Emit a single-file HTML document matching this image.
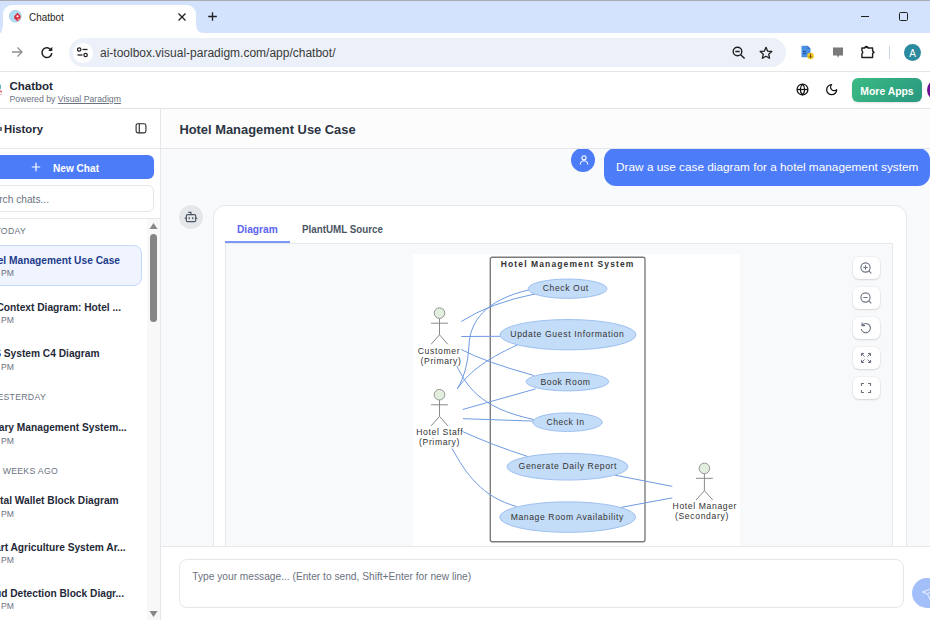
<!DOCTYPE html>
<html><head><meta charset="utf-8"><style>
html,body{margin:0;padding:0;width:930px;height:620px;overflow:hidden;background:#fff;}
body{position:relative;font-family:"Liberation Sans", sans-serif;}
.t{position:absolute;line-height:1;white-space:nowrap;}
svg{overflow:visible;}
</style></head><body>
<div style="position:absolute;left:0px;top:0px;width:930px;height:33px;background:#d3e3fd;"></div>
<div style="position:absolute;left:0px;top:0px;width:930px;height:1px;background:#a8abb0;"></div>
<div style="position:absolute;left:2.5px;top:5px;width:193.5px;height:28px;background:#fff;border-radius:9px 9px 0 0;"></div>
<svg style="position:absolute;left:188px;top:24px;" width="16" height="9" viewBox="0 0 16 9"><path d="M0 0 L8 0 Q8 9 16 9 L0 9 Z" fill="#fff"/></svg>
<svg style="position:absolute;left:0px;top:24px;" width="4" height="9" viewBox="0 0 4 9"><path d="M4 0 L4 9 L0 9 Q2 9 2 5 Z" fill="#fff"/></svg>
<svg style="position:absolute;left:8px;top:9px;" width="15" height="15" viewBox="0 0 15 15"><circle cx="7.3" cy="7.2" r="5.9" fill="#aedcf3" stroke="#9cc6dc" stroke-width="0.7"/><path d="M9.5 3.8 L12.7 7 L12.2 9.6 L9.5 12.4 L6.3 9.2 L6.3 7 Z" fill="#d42a3a"/><path d="M9.5 9.5 L12.2 9.6 L9.5 12.4 Z" fill="#e88a93"/><circle cx="9.5" cy="7.3" r="1.1" fill="#fff"/></svg>
<div class="t" style="left:29.00px;top:12.09px;font-size:11px;color:#1f1f1f;font-weight:normal;transform:scaleX(0.9);transform-origin:left center;">Chatbot</div>
<svg style="position:absolute;left:177px;top:12px;" width="10" height="10" viewBox="0 0 10 10"><path d="M1.5 1.5 L8.5 8.5 M8.5 1.5 L1.5 8.5" stroke="#1f1f1f" stroke-width="1.3"/></svg>
<svg style="position:absolute;left:207px;top:11px;" width="11" height="11" viewBox="0 0 11 11"><path d="M5.5 1.2 V9.8 M1.2 5.5 H9.8" stroke="#1f1f1f" stroke-width="1.3"/></svg>
<div style="position:absolute;left:861px;top:16px;width:8px;height:1px;background:#1f1f1f;"></div>
<div style="position:absolute;left:899px;top:12px;width:9px;height:9px;border:1.2px solid #1f1f1f;border-radius:1.5px;box-sizing:border-box;"></div>
<div style="position:absolute;left:0px;top:33px;width:930px;height:38px;background:#fff;"></div>
<div style="position:absolute;left:0px;top:71px;width:930px;height:1px;background:#e6e6e6;"></div>
<svg style="position:absolute;left:10px;top:45px;" width="14" height="14" viewBox="0 0 14 14"><path d="M2 7 H12 M7.5 2.5 L12 7 L7.5 11.5" stroke="#8f8f8f" stroke-width="1.3" fill="none"/></svg>
<svg style="position:absolute;left:40px;top:45px;" width="14" height="14" viewBox="0 0 14 14"><path d="M11.2 5.2 A4.9 4.9 0 1 0 11.8 8" stroke="#1f1f1f" stroke-width="1.5" fill="none"/><path d="M12.3 1.8 V6 H8.1 Z" fill="#1f1f1f"/></svg>
<div style="position:absolute;left:69px;top:38px;width:717px;height:29px;background:#ecf1f9;border-radius:14.5px;"></div>
<div style="position:absolute;left:72.5px;top:42.5px;width:20px;height:20px;background:#fff;border-radius:50%;"></div>
<svg style="position:absolute;left:76px;top:46px;" width="14" height="13" viewBox="0 0 14 13"><circle cx="3.2" cy="3.5" r="1.7" fill="none" stroke="#1f1f1f" stroke-width="1.2"/><path d="M6.5 3.5 H11.5" stroke="#1f1f1f" stroke-width="1.3"/><circle cx="9.6" cy="9" r="1.7" fill="none" stroke="#1f1f1f" stroke-width="1.2"/><path d="M1.5 9 H6.5" stroke="#1f1f1f" stroke-width="1.3"/></svg>
<div class="t" style="left:100.00px;top:47.14px;font-size:12px;color:#3a3a3a;font-weight:normal;">ai-toolbox.visual-paradigm.com/app/chatbot/</div>
<svg style="position:absolute;left:732px;top:46px;" width="14" height="14" viewBox="0 0 14 14"><circle cx="5.5" cy="5.5" r="4.3" fill="none" stroke="#1f1f1f" stroke-width="1.4"/><path d="M3.3 5.5 H7.7 M8.7 8.7 L12.6 12.6" stroke="#1f1f1f" stroke-width="1.4"/></svg>
<svg style="position:absolute;left:759px;top:45.5px;" width="14" height="14" viewBox="0 0 14 14"><path d="M7 1.3 L8.7 5.2 L12.8 5.5 L9.7 8.2 L10.6 12.3 L7 10.2 L3.4 12.3 L4.3 8.2 L1.2 5.5 L5.3 5.2 Z" fill="none" stroke="#1f1f1f" stroke-width="1.3" stroke-linejoin="round"/></svg>
<svg style="position:absolute;left:800px;top:45px;" width="15" height="15" viewBox="0 0 15 15"><path d="M1.5 0.8 H7.5 L10.5 3.8 V12.2 H1.5 Z" fill="#4a90e2"/><path d="M7.5 0.8 V3.8 H10.5" fill="#2b6cc4"/><rect x="3" y="6" width="3" height="1" fill="#1a4f9c"/><rect x="3" y="8" width="3" height="1" fill="#1a4f9c"/><circle cx="10.5" cy="11" r="3.3" fill="#f3c623"/><path d="M10.5 8.8 V12.6 M9 11.3 L10.5 12.8 L12 11.3" stroke="#5a4500" stroke-width="0.9" fill="none"/></svg>
<svg style="position:absolute;left:832px;top:46px;" width="12" height="13" viewBox="0 0 12 13"><path d="M1 1.5 H11 V9.5 H7 L6 11.8 L5 9.5 H1 Z" fill="#7a7a7a"/></svg>
<svg style="position:absolute;left:860px;top:45px;" width="16" height="14" viewBox="0 0 16 14"><path d="M1.9 3 H4.9 V2.2 Q6.4 0.6 7.9 2.2 V3 H12.6 V5.8 L14 7.3 L12.6 8.8 V12.5 H1.9 V8.8 Q3.6 7.3 1.9 5.8 Z" fill="none" stroke="#1f1f1f" stroke-width="1.4" stroke-linejoin="round"/><path d="M4.9 3 V2.2 Q6.4 0.6 7.9 2.2 V3 Z M12.6 5.8 L14 7.3 L12.6 8.8 Z" fill="#1f1f1f"/></svg>
<div style="position:absolute;left:889px;top:46px;width:1px;height:13px;background:#c7d3e6;"></div>
<div style="position:absolute;left:904px;top:44px;width:17px;height:17px;background:#2b8a9e;border-radius:50%;"></div>
<div class="t" style="left:912.50px;transform:translateX(-50%);top:48.53px;font-size:10px;color:#fff;font-weight:normal;">A</div>
<div style="position:absolute;left:0px;top:72px;width:930px;height:36px;background:#fff;"></div>
<div style="position:absolute;left:0px;top:108px;width:930px;height:1.5px;background:#e2e3e6;box-shadow:0 1px 3px rgba(0,0,0,0.05);"></div>
<svg style="position:absolute;left:-10px;top:82px;" width="12" height="14" viewBox="0 0 12 14"><circle cx="5" cy="5" r="6" fill="#5aa9b8"/><rect x="8" y="8.5" width="4" height="2" fill="#e37b86"/><rect x="8" y="12" width="4" height="1" fill="#f0b3b9"/></svg>
<div class="t" style="left:9.50px;top:80.57px;font-size:11.5px;color:#1f2937;font-weight:bold;">Chatbot</div>
<div class="t" style="left:9.50px;top:94.54px;font-size:8.7px;color:#6b7280;font-weight:normal;">Powered by <span style="text-decoration:underline">Visual Paradigm</span></div>
<svg style="position:absolute;left:795.6px;top:83.3px;" width="13" height="13" viewBox="0 0 13 13"><g transform="scale(0.5417)" fill="none" stroke="#111" stroke-width="2.3"><circle cx="12" cy="12" r="10"/><path d="M12 2a14.5 14.5 0 0 0 0 20 14.5 14.5 0 0 0 0-20"/><path d="M2 12h20"/></g></svg>
<svg style="position:absolute;left:825.3px;top:83.3px;" width="13.3" height="13.3" viewBox="0 0 13.3 13.3"><g transform="scale(0.5556)" fill="none" stroke="#111" stroke-width="2.3" stroke-linejoin="round"><path d="M12 3a6 6 0 0 0 9 9 9 9 0 1 1-9-9Z"/></g></svg>
<div style="position:absolute;left:852px;top:78px;width:70px;height:24px;background:linear-gradient(135deg,#3bbb83,#2a9880);border-radius:6px;box-shadow:0 1px 2px rgba(0,0,0,0.12);"></div>
<div class="t" style="left:887.00px;transform:translateX(-50%);top:86.90px;font-size:10.4px;color:#fff;font-weight:bold;">More Apps</div>
<div style="position:absolute;left:927.3px;top:78.8px;width:22px;height:22px;background:#6e0f94;border-radius:50%;"></div>
<div style="position:absolute;left:0px;top:109px;width:160px;height:511px;background:#fff;"></div>
<div style="position:absolute;left:160px;top:109px;width:1px;height:511px;background:#e5e7eb;"></div>
<div style="position:absolute;left:0px;top:127px;width:1.5px;height:4px;background:#6b7280;"></div>
<div style="position:absolute;left:0px;top:148px;width:160px;height:1px;background:#e5e7eb;"></div>
<div class="t" style="left:4.00px;top:124.23px;font-size:11.3px;color:#1f2937;font-weight:bold;">History</div>
<svg style="position:absolute;left:134px;top:122px;" width="13" height="12" viewBox="0 0 13 12"><rect x="2.1" y="1.7" width="9.8" height="9.2" rx="1.8" fill="none" stroke="#2a2a2a" stroke-width="1.1"/><path d="M5.3 1.7 V10.9" stroke="#2a2a2a" stroke-width="1.1"/></svg>
<div style="position:absolute;left:-10px;top:155px;width:164px;height:24px;background:#4d7cf8;border-radius:6px;"></div>
<svg style="position:absolute;left:31px;top:162px;" width="10" height="10" viewBox="0 0 10 10"><path d="M5 0.8 V9.2 M0.8 5 H9.2" stroke="#fff" stroke-width="1.2"/></svg>
<div class="t" style="left:53.00px;top:163.65px;font-size:10.1px;color:#fff;font-weight:bold;">New Chat</div>
<div style="position:absolute;left:-10px;top:185px;width:164px;height:27px;background:#fff;border:1px solid #e5e7eb;border-radius:6px;box-sizing:border-box;"></div>
<div class="t" style="right:881.00px;top:195.27px;font-size:10.2px;color:#6b7280;font-weight:normal;">Search chats...</div>
<div style="position:absolute;left:0px;top:218px;width:160px;height:1px;background:#e5e7eb;"></div>
<div style="position:absolute;left:147px;top:219px;width:13px;height:401px;background:#f8f8f8;"></div>
<svg style="position:absolute;left:149px;top:222px;" width="9" height="8" viewBox="0 0 9 8"><path d="M4.5 1 L8.5 7 H0.5 Z" fill="#878787"/></svg>
<div style="position:absolute;left:150px;top:234px;width:7px;height:88px;background:#858585;border-radius:4px;"></div>
<svg style="position:absolute;left:149px;top:610px;" width="9" height="8" viewBox="0 0 9 8"><path d="M4.5 7 L8.5 1 H0.5 Z" fill="#878787"/></svg>
<div class="t" style="right:904.00px;top:226.74px;font-size:8.7px;color:#6b7280;font-weight:normal;letter-spacing:0.3px;">TODAY</div>
<div style="position:absolute;left:-10px;top:245px;width:152px;height:41px;background:#eff4ff;border:1px solid #c7d8fc;border-radius:8px;box-sizing:border-box;"></div>
<div class="t" style="right:810.00px;top:255.67px;font-size:10.2px;color:#1e3a8a;font-weight:bold;">Hotel Management Use Case</div>
<div class="t" style="right:916.00px;top:269.02px;font-size:8.6px;color:#6b7280;font-weight:normal;">2:45 PM</div>
<div class="t" style="right:809.00px;top:302.57px;font-size:10.2px;color:#1f2937;font-weight:bold;">System Context Diagram: Hotel ...</div>
<div class="t" style="right:916.00px;top:315.92px;font-size:8.6px;color:#6b7280;font-weight:normal;">2:45 PM</div>
<div class="t" style="right:830.50px;top:348.97px;font-size:10.2px;color:#1f2937;font-weight:bold;">HMS System C4 Diagram</div>
<div class="t" style="right:916.00px;top:362.52px;font-size:8.6px;color:#6b7280;font-weight:normal;">2:45 PM</div>
<div class="t" style="right:884.00px;top:393.14px;font-size:8.7px;color:#6b7280;font-weight:normal;letter-spacing:0.3px;">YESTERDAY</div>
<div class="t" style="right:803.30px;top:423.17px;font-size:10.2px;color:#1f2937;font-weight:bold;">Library Management System...</div>
<div class="t" style="right:916.00px;top:437.02px;font-size:8.6px;color:#6b7280;font-weight:normal;">2:45 PM</div>
<div class="t" style="right:872.00px;top:466.74px;font-size:8.7px;color:#6b7280;font-weight:normal;letter-spacing:0.3px;">3 WEEKS AGO</div>
<div class="t" style="right:811.40px;top:496.17px;font-size:10.2px;color:#1f2937;font-weight:bold;">Digital Wallet Block Diagram</div>
<div class="t" style="right:916.00px;top:509.62px;font-size:8.6px;color:#6b7280;font-weight:normal;">2:45 PM</div>
<div class="t" style="right:804.40px;top:542.87px;font-size:10.2px;color:#1f2937;font-weight:bold;">Smart Agriculture System Ar...</div>
<div class="t" style="right:916.00px;top:556.22px;font-size:8.6px;color:#6b7280;font-weight:normal;">2:45 PM</div>
<div class="t" style="right:806.00px;top:589.37px;font-size:10.2px;color:#1f2937;font-weight:bold;">Fraud Detection Block Diagr...</div>
<div class="t" style="right:916.00px;top:602.22px;font-size:8.6px;color:#6b7280;font-weight:normal;">2:45 PM</div>
<div style="position:absolute;left:161px;top:109px;width:769px;height:39px;background:#fcfcfd;"></div>
<div style="position:absolute;left:161px;top:148px;width:769px;height:1px;background:#e5e7eb;"></div>
<div class="t" style="left:179.40px;top:124.18px;font-size:12.9px;color:#2b3442;font-weight:bold;">Hotel Management Use Case</div>
<div style="position:absolute;left:161px;top:149px;width:769px;height:397px;background:#f9fafb;overflow:hidden;"></div>
<div style="position:absolute;left:161px;top:149px;width:769px;height:397px;overflow:hidden;">
<div style="position:absolute;left:410px;top:-1.5px;width:24px;height:24px;border-radius:50%;background:#4d7cf8;"></div>
<div style="position:absolute;left:443px;top:-1px;width:325.5px;height:38px;border-radius:12px;background:#4d7cf8;"></div>
<svg style="position:absolute;left:416.5px;top:4.5px" width="12" height="12" viewBox="0 0 12 12"><circle cx="6" cy="3.8" r="2.1" fill="none" stroke="#fff" stroke-width="1.1"/><path d="M2.3 10.5 A3.7 3.7 0 0 1 9.7 10.5" fill="none" stroke="#fff" stroke-width="1.1"/></svg>
<div style="position:absolute;left:17.80000000000001px;top:55.80000000000001px;width:24px;height:24px;border-radius:50%;background:#e5e7eb;"></div>
<svg style="position:absolute;left:22.69999999999999px;top:60.900000000000006px" width="14" height="14" viewBox="0 0 24 24"><g fill="none" stroke="#4b5563" stroke-width="2" stroke-linecap="round" stroke-linejoin="round"><path d="M12 8V4H8"/><rect width="16" height="12" x="4" y="8" rx="2"/><path d="M2 14h2"/><path d="M20 14h2"/><path d="M15 13v2"/><path d="M9 13v2"/></g></svg>
<div style="position:absolute;left:51.5px;top:56px;width:694px;height:420px;border-radius:12px;background:#fff;border:1px solid #e5e7eb;box-sizing:border-box;"></div>
</div>
<div class="t" style="left:236.60px;top:223.89px;font-size:11px;color:#5b63f0;font-weight:bold;transform:scaleX(0.925);transform-origin:left center;">Diagram</div>
<div style="position:absolute;left:224.5px;top:240.5px;width:65px;height:2px;background:#7b98f6;"></div>
<div class="t" style="left:301.70px;top:223.89px;font-size:11px;color:#4b5563;font-weight:bold;transform:scaleX(0.89);transform-origin:left center;">PlantUML Source</div>
<div style="position:absolute;left:224.5px;top:242.5px;width:668.5px;height:1px;background:#e5e7eb;"></div>
<div style="position:absolute;left:224.5px;top:243.5px;width:668.5px;height:303px;background:#f8f9fb;border-left:1px solid #e5e7eb;border-right:1px solid #e5e7eb;box-sizing:border-box;"></div>
<div style="position:absolute;left:412.7px;top:253.8px;width:327px;height:292.5px;background:#fff;"></div>
<svg style="position:absolute;left:0;top:0;" width="930" height="620" viewBox="0 0 930 620"><defs><clipPath id="dc"><rect x="412.7" y="253.8" width="327" height="292.2"/></clipPath></defs><g clip-path="url(#dc)" font-family="Liberation Sans, sans-serif"><rect x="490.3" y="257.3" width="154.7" height="284.5" rx="2" fill="none" stroke="#7c7c7c" stroke-width="1.4"/><path d="M461.3 321.5 Q490 303 535 293.9" fill="none" stroke="#6f9be3" stroke-width="1"/><path d="M457.3 388.7 C463 380 468 365 469 345 C470 322 485 300 528.6 290" fill="none" stroke="#6f9be3" stroke-width="1"/><path d="M461.3 336.5 L500.5 336.3" fill="none" stroke="#6f9be3" stroke-width="1"/><path d="M457.3 388.7 C468 374 482 361 517.8 344.7" fill="none" stroke="#6f9be3" stroke-width="1"/><path d="M461.2 349.5 Q485 362 533.9 375.5" fill="none" stroke="#6f9be3" stroke-width="1"/><path d="M456.8 366 C466 384 478 408 533.9 419.5" fill="none" stroke="#6f9be3" stroke-width="1"/><path d="M462.6 409.5 L535.5 388.9" fill="none" stroke="#6f9be3" stroke-width="1"/><path d="M462.9 418.7 L533.9 421.1" fill="none" stroke="#6f9be3" stroke-width="1"/><path d="M462.6 431.5 Q492 445 527.9 456.5" fill="none" stroke="#6f9be3" stroke-width="1"/><path d="M452.1 448.4 C466 474 482 497 516.6 506.5" fill="none" stroke="#6f9be3" stroke-width="1"/><path d="M672.3 486.4 L614.7 475.1" fill="none" stroke="#6f9be3" stroke-width="1"/><path d="M672.3 497.9 L620.3 507.5" fill="none" stroke="#6f9be3" stroke-width="1"/><ellipse cx="567.6" cy="288.7" rx="39.4" ry="9.7" fill="#c3dcf7" stroke="#8fb6ec" stroke-width="0.8"/><ellipse cx="568" cy="334.7" rx="68" ry="15.2" fill="#c3dcf7" stroke="#8fb6ec" stroke-width="0.8"/><ellipse cx="567.4" cy="381.6" rx="41.3" ry="9.3" fill="#c3dcf7" stroke="#8fb6ec" stroke-width="0.8"/><ellipse cx="567.5" cy="422.2" rx="34.75" ry="9.3" fill="#c3dcf7" stroke="#8fb6ec" stroke-width="0.8"/><ellipse cx="567.5" cy="466.7" rx="60.5" ry="13.4" fill="#c3dcf7" stroke="#8fb6ec" stroke-width="0.8"/><ellipse cx="567.7" cy="517.1" rx="68" ry="15.3" fill="#c3dcf7" stroke="#8fb6ec" stroke-width="0.8"/><text x="500.8" y="267.3" font-size="8.5" font-weight="bold" letter-spacing="1.11" fill="#333">Hotel Management System</text><text x="542.7" y="291.4" font-size="8.6" font-weight="normal" letter-spacing="0.611" fill="#333">Check Out</text><text x="510.3" y="337.2" font-size="8.6" font-weight="normal" letter-spacing="0.656" fill="#333">Update Guest Information</text><text x="540.5" y="384.5" font-size="8.6" font-weight="normal" letter-spacing="0.561" fill="#333">Book Room</text><text x="546.5" y="424.6" font-size="8.6" font-weight="normal" letter-spacing="0.511" fill="#333">Check In</text><text x="518.6" y="468.8" font-size="8.6" font-weight="normal" letter-spacing="0.619" fill="#333">Generate Daily Report</text><text x="510.7" y="519.9" font-size="8.6" font-weight="normal" letter-spacing="0.605" fill="#333">Manage Room Availability</text><text x="417.7" y="353.7" font-size="8.6" font-weight="normal" letter-spacing="0.676" fill="#333">Customer</text><text x="420.6" y="363.6" font-size="8.6" font-weight="normal" letter-spacing="0.606" fill="#333">(Primary)</text><text x="416.2" y="435" font-size="8.6" font-weight="normal" letter-spacing="0.646" fill="#333">Hotel Staff</text><text x="419.1" y="445.2" font-size="8.6" font-weight="normal" letter-spacing="0.606" fill="#333">(Primary)</text><text x="672.6" y="509.3" font-size="8.6" font-weight="normal" letter-spacing="0.627" fill="#333">Hotel Manager</text><text x="674.9" y="519.4" font-size="8.6" font-weight="normal" letter-spacing="0.658" fill="#333">(Secondary)</text><path d="M439.5 318.5 V334.8 M431.1 323.2 H447.9 M439.5 334.8 L431.1 344.3 M439.5 334.8 L447.9 344.3" stroke="#8a8a8a" stroke-width="1" fill="none"/><circle cx="439.5" cy="313.1" r="5.3" fill="#e2efdf" stroke="#8a8a8a" stroke-width="0.9"/><path d="M439.5 400.09999999999997 V416.4 M431.1 404.8 H447.9 M439.5 416.4 L431.1 425.9 M439.5 416.4 L447.9 425.9" stroke="#8a8a8a" stroke-width="1" fill="none"/><circle cx="439.5" cy="394.7" r="5.3" fill="#e2efdf" stroke="#8a8a8a" stroke-width="0.9"/><path d="M704.4 473.79999999999995 V490.7 M696.0 478.3 H712.8 M704.4 490.7 L696.0 500 M704.4 490.7 L712.8 500" stroke="#8a8a8a" stroke-width="1" fill="none"/><circle cx="704.4" cy="468.4" r="5.3" fill="#e2efdf" stroke="#8a8a8a" stroke-width="0.9"/></g></svg>
<div style="position:absolute;left:852.7px;top:256.5px;width:27px;height:22.3px;background:#fff;border-radius:6px;box-shadow:0 1px 2px rgba(0,0,0,0.12),0 0 0 1px rgba(0,0,0,0.03);"></div>
<div style="position:absolute;left:852.7px;top:286.5px;width:27px;height:22.3px;background:#fff;border-radius:6px;box-shadow:0 1px 2px rgba(0,0,0,0.12),0 0 0 1px rgba(0,0,0,0.03);"></div>
<div style="position:absolute;left:852.7px;top:316.5px;width:27px;height:22.3px;background:#fff;border-radius:6px;box-shadow:0 1px 2px rgba(0,0,0,0.12),0 0 0 1px rgba(0,0,0,0.03);"></div>
<div style="position:absolute;left:852.7px;top:346.5px;width:27px;height:22.3px;background:#fff;border-radius:6px;box-shadow:0 1px 2px rgba(0,0,0,0.12),0 0 0 1px rgba(0,0,0,0.03);"></div>
<div style="position:absolute;left:852.7px;top:376.5px;width:27px;height:22.3px;background:#fff;border-radius:6px;box-shadow:0 1px 2px rgba(0,0,0,0.12),0 0 0 1px rgba(0,0,0,0.03);"></div>
<div class="t" style="left:616.10px;top:162.01px;font-size:11.8px;color:#fff;font-weight:normal;">Draw a use case diagram for a hotel management system</div>
<svg style="position:absolute;left:859px;top:260.5px;" width="14" height="14" viewBox="0 0 14 14"><circle cx="6.5" cy="6.5" r="4.6" fill="none" stroke="#6b7280" stroke-width="1.1"/><path d="M6.5 4.3 V8.7 M4.3 6.5 H8.7 M9.9 9.9 L12.3 12.3" stroke="#6b7280" stroke-width="1.1"/></svg>
<svg style="position:absolute;left:859px;top:290.5px;" width="14" height="14" viewBox="0 0 14 14"><circle cx="6.5" cy="6.5" r="4.6" fill="none" stroke="#6b7280" stroke-width="1.1"/><path d="M4.3 6.5 H8.7 M9.9 9.9 L12.3 12.3" stroke="#6b7280" stroke-width="1.1"/></svg>
<svg style="position:absolute;left:859px;top:320.5px;" width="14" height="14" viewBox="0 0 14 14"><path d="M3.2 4.2 A4.6 4.6 0 1 1 2.3 8" fill="none" stroke="#6b7280" stroke-width="1.1"/><path d="M3 1.5 V4.6 H6.1" fill="none" stroke="#6b7280" stroke-width="1.1"/></svg>
<svg style="position:absolute;left:859px;top:350.5px;" width="14" height="14" viewBox="0 0 14 14"><path d="M2.5 2.5 L5.5 5.5 M2.5 2.5 H5 M2.5 2.5 V5 M11.5 2.5 L8.5 5.5 M11.5 2.5 H9 M11.5 2.5 V5 M2.5 11.5 L5.5 8.5 M2.5 11.5 H5 M2.5 11.5 V9 M11.5 11.5 L8.5 8.5 M11.5 11.5 H9 M11.5 11.5 V9" fill="none" stroke="#6b7280" stroke-width="1"/></svg>
<svg style="position:absolute;left:859px;top:380.5px;" width="14" height="14" viewBox="0 0 14 14"><path d="M2.5 5 V2.5 H5 M9 2.5 H11.5 V5 M11.5 9 V11.5 H9 M5 11.5 H2.5 V9" fill="none" stroke="#6b7280" stroke-width="1.1"/></svg>
<div style="position:absolute;left:161px;top:546px;width:769px;height:74px;background:#fff;"></div>
<div style="position:absolute;left:161px;top:546px;width:769px;height:1px;background:#e5e7eb;"></div>
<div style="position:absolute;left:179.4px;top:558.6px;width:724.3px;height:49.2px;background:#fff;border:1px solid #e5e7eb;border-radius:8px;box-sizing:border-box;"></div>
<div class="t" style="left:192.30px;top:571.87px;font-size:10.2px;color:#6b7280;font-weight:normal;">Type your message... (Enter to send, Shift+Enter for new line)</div>
<div style="position:absolute;left:912.3px;top:578.4px;width:30px;height:30px;background:#a3bffa;border-radius:50%;"></div>
<svg style="position:absolute;left:921px;top:584.5px;" width="16" height="16" viewBox="0 0 16 16"><path d="M14.5 2 L1.5 7 L6.5 9 L9 14.5 Z M6.5 9 L14.5 2" fill="none" stroke="#fff" stroke-width="0.9" stroke-linejoin="round" opacity="0.9"/></svg>
</body></html>
